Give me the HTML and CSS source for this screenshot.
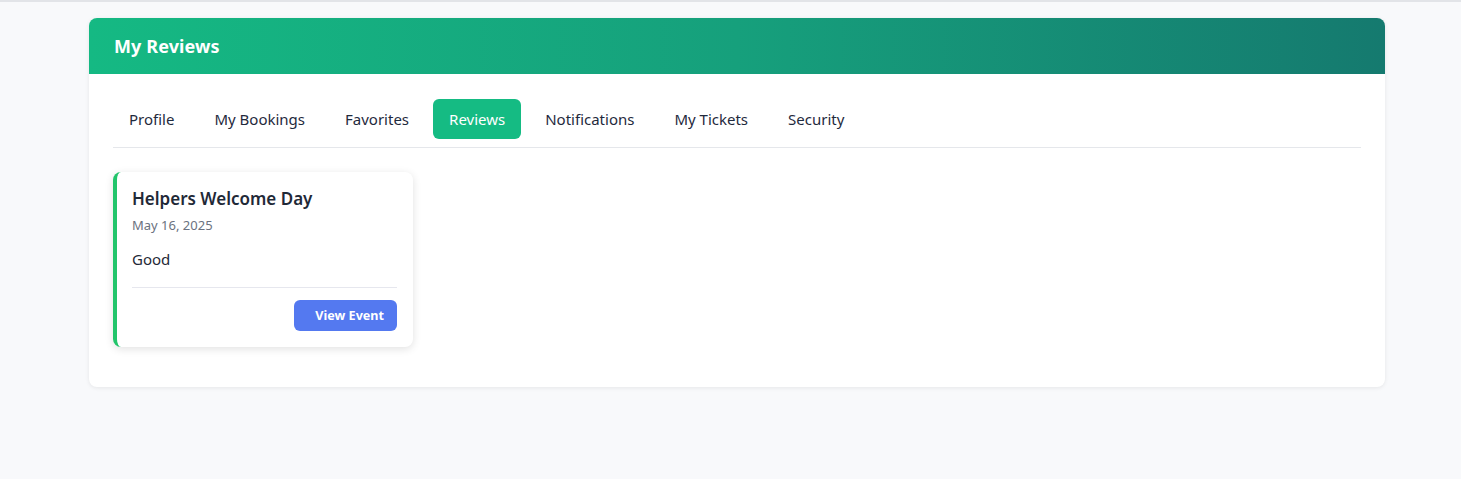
FILE: index.html
```html
<!DOCTYPE html>
<html lang="en">
<head>
<meta charset="utf-8">
<title>My Reviews</title>
<link rel="stylesheet" href="styles.css">
</head>
<body>
<div class="topline"></div>
<main class="page">
  <section class="panel">
    <header class="panel-head">
      <h1>My Reviews</h1>
    </header>
    <div class="panel-body">
      <nav class="tabs">
        <a class="tab">Profile</a>
        <a class="tab">My Bookings</a>
        <a class="tab">Favorites</a>
        <a class="tab active">Reviews</a>
        <a class="tab">Notifications</a>
        <a class="tab">My Tickets</a>
        <a class="tab">Security</a>
      </nav>
      <div class="reviews">
        <article class="review">
          <h2>Helpers Welcome Day</h2>
          <div class="date">May 16, 2025</div>
          <p class="text">Good</p>
          <div class="review-foot">
            <a class="btn">View Event</a>
          </div>
        </article>
      </div>
    </div>
  </section>
</main>
</body>
</html>
```
FILE: styles.css
```css
* { box-sizing: border-box; }
html, body { margin: 0; padding: 0; }
body {
  background: #f8f9fb;
  font-family: "Noto Sans", "Open Sans", "Liberation Sans", sans-serif;
  color: #1f2937;
}
.topline { height: 2px; background: #e2e4e8; }
.page { padding: 16px 76px 40px 89px; }
.panel {
  width: 1296px;
  background: #fff;
  border-radius: 8px;
  box-shadow: 0 1px 4px rgba(0,0,0,0.08);
  overflow: hidden;
}
.panel-head {
  height: 56px;
  display: flex;
  align-items: center;
  padding: 0 24px 0 25px;
  background: linear-gradient(90deg, #15b983 0%, #16a07c 50%, #157a6f 100%);
}
.panel-head h1 {
  margin: 0;
  color: #fff;
  font-size: 18px;
  font-weight: 700;
  letter-spacing: 0.1px;
}
.panel-body { padding: 25px 24px 40px; }
.tabs {
  display: flex;
  gap: 8px;
  padding-bottom: 8px;
  border-bottom: 1px solid #e5e7eb;
}
.tab {
  display: block;
  height: 40px;
  line-height: 40px;
  padding: 0 16px;
  border-radius: 6px;
  font-size: 15px;
  color: #1f2a3d;
  cursor: pointer;
}
.tab.active { background: #15bb83; color: #fff; }
.reviews { display: grid; grid-template-columns: 300px; padding-top: 24px; }
.review {
  background: #fff;
  border-left: 4px solid #22c56b;
  border-radius: 8px;
  box-shadow: 0 2px 8px rgba(0,0,0,0.12);
  padding: 14px 16px 16px 15px;
}
.review h2 {
  margin: 0;
  font-size: 17px;
  font-weight: 600;
  color: #1f2937;
  line-height: 26px;
}
.date { margin-top: 4px; font-size: 13px; color: #6b7280; line-height: 18px; }
.text { margin: 15px 0 0; font-size: 15px; line-height: 20px; color: #1f2937; }
.review-foot {
  margin-top: 18px;
  border-top: 1px solid #e6e7ee;
  padding-top: 12px;
  display: flex;
  justify-content: flex-end;
}
.btn {
  display: block;
  height: 31px;
  line-height: 31px;
  padding: 0 13px 0 21px;
  background: #5479f0;
  color: #fff;
  font-size: 12.6px;
  font-weight: 700;
  border-radius: 6px;
}
```
